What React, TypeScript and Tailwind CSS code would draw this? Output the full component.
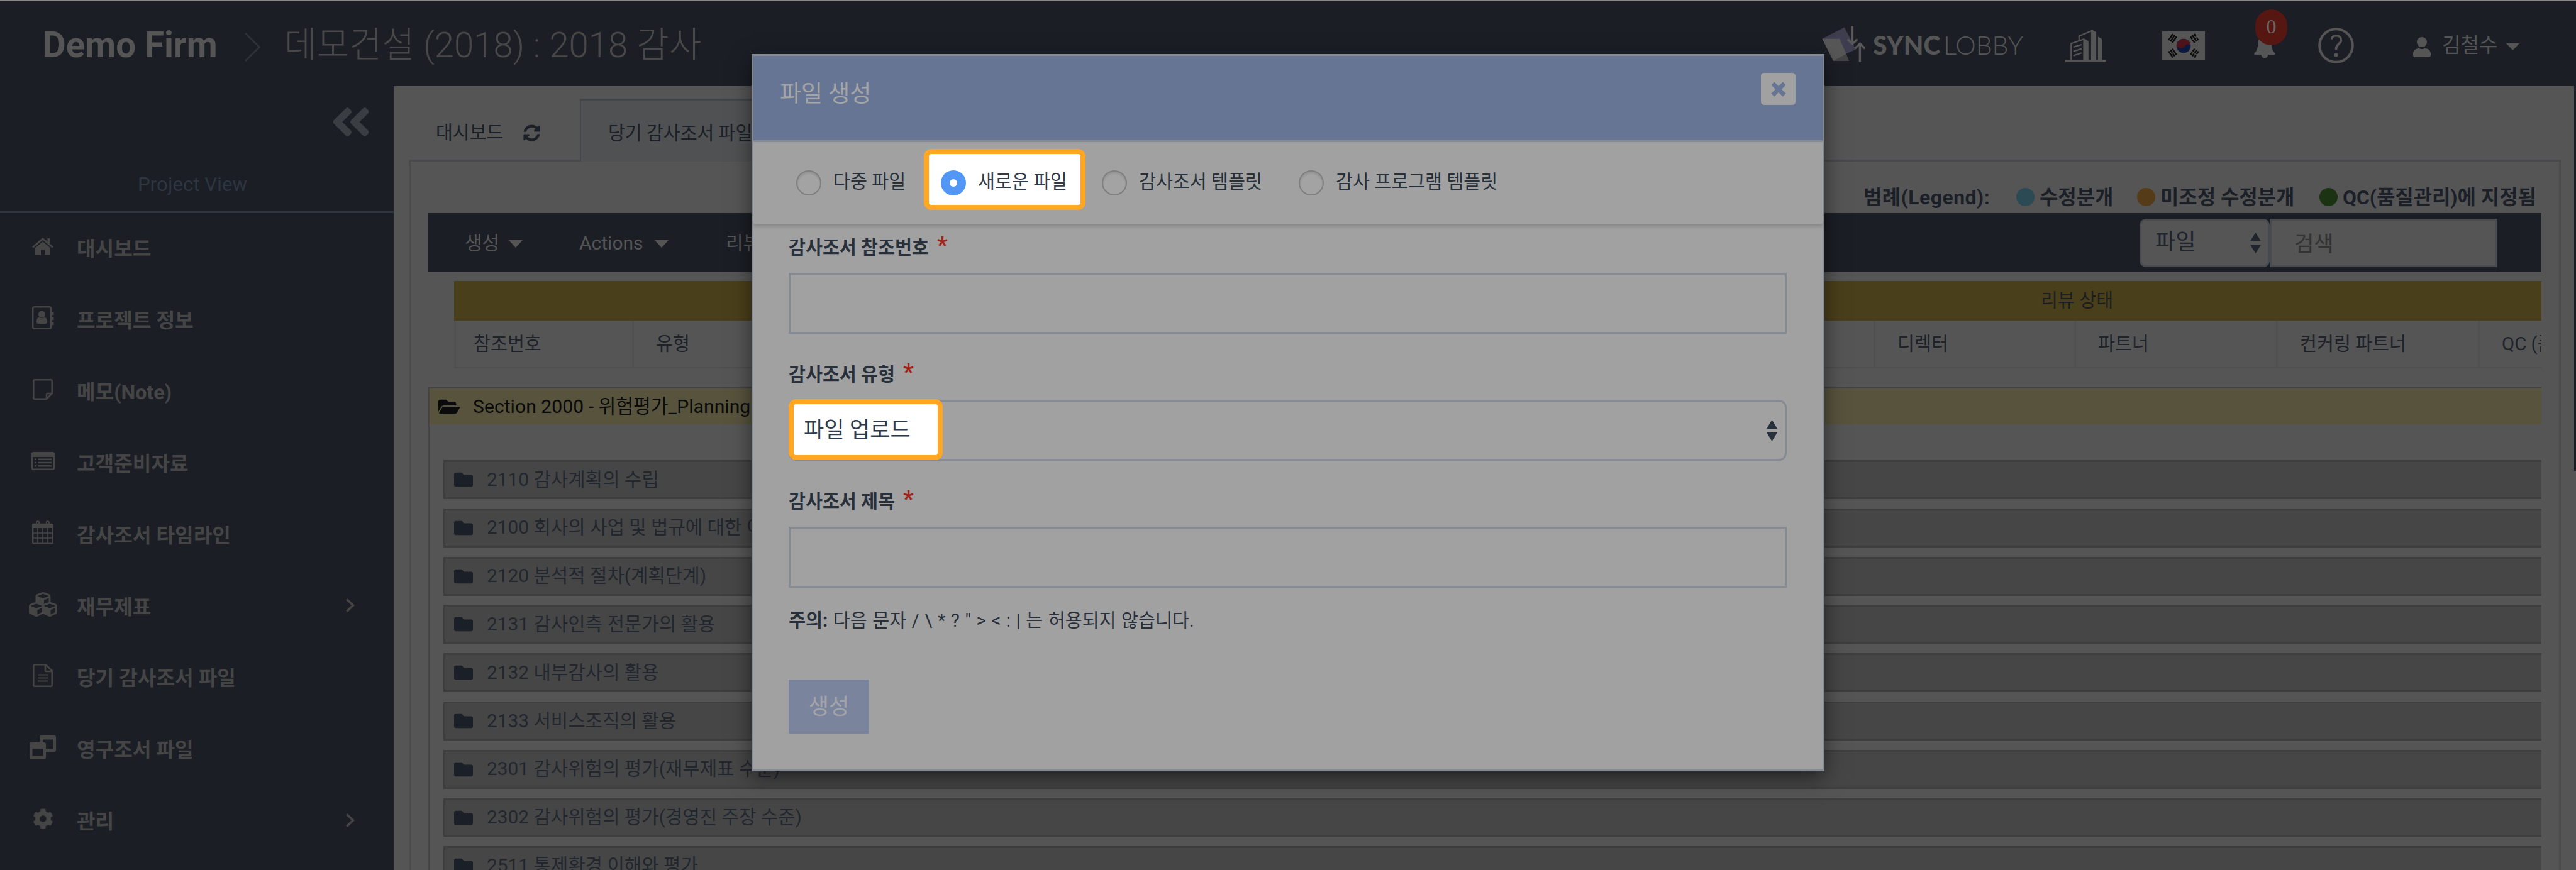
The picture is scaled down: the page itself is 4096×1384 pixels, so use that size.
import React from "react";
import { FaAngleDoubleLeft, FaCog, FaCubes, FaFolder, FaFolderOpen, FaUser, FaSyncAlt } from "react-icons/fa";

const fontStack = "font-[Roboto,'Noto_Sans_CJK_KR',sans-serif]";

function Caret({ className }: { className: string }) {
  return (
    <svg viewBox="0 0 22 12" preserveAspectRatio="none" className={className} fill="currentColor">
      <path d="M0 0H22L11 12Z" />
    </svg>
  );
}

function UpDown({ className }: { className: string }) {
  return (
    <svg viewBox="0 0 17 34" preserveAspectRatio="none" className={className} fill="currentColor">
      <path d="M8.500 0L17 14H0ZM0 20H17L8.500 34Z" />
    </svg>
  );
}

function SyncLogo() {
  return (
    <svg viewBox="50 85 305 256" className="mt-[40px] h-[58px] w-[69px] shrink-0">
      <path d="M52 176L208 96L288 252L215 284Z" fill="#3e3d4f" />
      <path d="M128 332L222 285L240 332Z" fill="#444444" />
      <path d="M52 177H174L222 285L130 332Z" fill="#575757" />
      <g fill="none" stroke="#575757" strokeWidth="15">
        <path d="M264 87V208M230 180L264 213L299 180" />
        <path d="M317 339V215M282 245L317 210L352 245" />
      </g>
    </svg>
  );
}

function Buildings() {
  return (
    <svg viewBox="0 0 65 52" className="ml-[67px] mt-[46px] h-[52px] w-[65px] shrink-0 text-[#555555]">
      <g fill="currentColor">
        <path d="M0 48.6H65V51.6H0Z" />
        <path d="M28.4 14.7H30.5L36.8 18.4V49.5H28.4Z" />
        <path d="M40.9 1.4L43 0.6L49.1 4V49.5H40.9Z" />
        <path d="M51.9 11.3L58.1 15V49.5H51.9Z" />
      </g>
      <g fill="none" stroke="currentColor" strokeWidth="2.2">
        <path d="M9.3 49.5V22.2L30 15.2M21.8 18.1V10.4L42.5 1.7" />
        <path d="M12.7 27.9L25.9 24M12.7 34.7L25.9 30.6M12.7 41.6L25.9 37.2" />
      </g>
    </svg>
  );
}

function Trigram({ x, y, angle, broken }: { x: number; y: number; angle: number; broken: number[] }) {
  return (
    <g transform={`translate(${x} ${y}) rotate(${angle})`} stroke="#0c0c0c" strokeWidth="2.4">
      {[-3.6, 0, 3.6].map((dy, i) => (
        <path key={dy} d={broken.includes(i) ? `M-6 ${dy}H-0.7M0.7 ${dy}H6` : `M-6 ${dy}H6`} />
      ))}
    </g>
  );
}

function KoreaFlag() {
  return (
    <svg viewBox="0 0 68 46" className="ml-[89px] mt-[49px] h-[46px] w-[68px] shrink-0">
      <path d="M0 0H68V46H0Z" fill="#555555" />
      <circle cx="34" cy="23" r="11.3" fill="#0b1a3c" />
      <path d="M23.2 20A11.3 11.3 0 0 1 45.2 22C43 20 39 19.5 36.5 23C33.500 27.500 27 28 23 24Z" fill="#4c131a" />
      <Trigram x={16.6} y={11} angle={-56} broken={[]} />
      <Trigram x={51.2} y={11} angle={56} broken={[0, 2]} />
      <Trigram x={16.6} y={34.6} angle={56} broken={[1]} />
      <Trigram x={51.2} y={34.6} angle={-56} broken={[0, 1, 2]} />
    </svg>
  );
}

function Bell() {
  return (
    <div className="relative ml-[78px] mt-[54px] h-[38px] w-[34px] shrink-0">
      <svg viewBox="0 0 34 38" className="h-[38px] w-[34px]" fill="#555555">
        <path d="M17 2C9 3 7 8 6.500 14C6 22 4 27 0.500 29.500C0 31 0.500 32 1.500 32H32.500C33.500 32 34 31 33.500 29.500C30 27 28 22 27.500 14C27 8 25 3 17 2Z" />
        <path d="M11.500 32H22.500C22 35.500 20 37.500 17 37.500S12 35.500 11.500 32Z" />
      </svg>
      <span className="absolute -top-[40px] left-[2px] flex h-[57px] w-[51px] items-center justify-center rounded-full bg-[#561713] pb-1 font-['Liberation_Serif',serif] text-[32px] leading-none text-[#6e6461]">
        0
      </span>
    </div>
  );
}

function Help() {
  return (
    <svg viewBox="0 0 57 57" className="ml-[68px] mt-[43px] h-[57px] w-[57px] shrink-0" fill="none" stroke="#555555">
      <circle cx="28.500" cy="28.500" r="26.300" strokeWidth="4" />
      <path d="M21.500 18.500C22 14.500 25 12.800 28.500 12.800C33 12.800 36.500 15.500 36.500 20C36.500 26 28.600 26.500 28.600 33V35.500" strokeWidth="3.600" />
      <circle cx="28.600" cy="43.500" r="3" fill="#555555" stroke="none" />
    </svg>
  );
}

const IconHome = () => (
  <svg viewBox="0 0 34 28" className="h-[28px] w-[34px]" fill="currentColor">
    <path d="M17 0L0 14.500L2 16.500L17 4L32 16.500L34 14.500L28.500 9.800V1H24.500V6.300Z" />
    <path d="M17 6.300L5 16.300V28H14V19.500H20V28H29V16.300Z" />
  </svg>
);
const IconAddress = () => (
  <svg viewBox="0 0 35 37" className="h-[37px] w-[35px]" fill="currentColor">
    <rect x="1.250" y="1.250" width="29" height="34.500" rx="2.500" fill="none" stroke="currentColor" strokeWidth="2.500" />
    <path d="M31 9H34.500V14H31ZM31 17H34.500V22H31ZM31 25H34.500V30H31Z" />
    <circle cx="15.500" cy="13" r="5.500" />
    <path d="M7 25.500C7 19.500 9.500 17.500 11.500 17.500C14 19.500 17 19.500 19.500 17.500C21.500 17.500 24 19.500 24 25.500C24 27 23 28 21.500 28H9.500C8 28 7 27 7 25.500Z" />
  </svg>
);
const IconNote = () => (
  <svg viewBox="0 0 32 33" className="h-[33px] w-[32px]" fill="none" stroke="currentColor" strokeWidth="2.500">
    <path d="M3 1.300H29Q30.700 1.300 30.700 3V23L22 31.700H3Q1.300 31.700 1.300 30V3Q1.300 1.300 3 1.300ZM22 31V24Q22 23 23 23H30" />
  </svg>
);
const IconList = () => (
  <svg viewBox="0 0 37 29" className="h-[29px] w-[37px]" fill="currentColor">
    <path fillRule="evenodd" d="M3 0H34Q37 0 37 3V26Q37 29 34 29H3Q0 29 0 26V3Q0 0 3 0ZM2.500 8V25.500Q2.500 26.500 3.500 26.500H33.500Q34.500 26.500 34.500 25.500V8Z" />
    <path d="M5.500 10.500H8V13H5.500ZM5.500 15.800H8V18.300H5.500ZM5.500 21H8V23.500H5.500ZM10.500 10.500H32V13H10.500ZM10.500 15.800H32V18.300H10.500ZM10.500 21H32V23.500H10.500Z" />
  </svg>
);
const IconCalendar = () => (
  <svg viewBox="0 0 34 38" className="h-[38px] w-[34px]" fill="none" stroke="currentColor">
    <path d="M2.500 5H31.500Q34 5 34 7.500V12H0V7.500Q0 5 2.500 5Z" fill="currentColor" stroke="none" />
    <rect x="1.200" y="6" width="31.600" height="30.700" rx="1.500" strokeWidth="2.400" />
    <path d="M1 20H33M1 28H33M9 12V36M17 12V36M25 12V36" strokeWidth="1.600" />
    <rect x="7.200" y="1.200" width="4" height="8" rx="2" strokeWidth="2" />
    <rect x="22.800" y="1.200" width="4" height="8" rx="2" strokeWidth="2" />
  </svg>
);
const IconFile = () => (
  <svg viewBox="0 0 32 37" className="h-[37px] w-[32px]" fill="none" stroke="currentColor" strokeWidth="2.500">
    <path d="M3 1.300H20.500L30.700 11V34Q30.700 35.700 29 35.700H3Q1.300 35.700 1.300 34V3Q1.300 1.300 3 1.300ZM20 2V11Q20 12 21 12H30" />
    <path d="M8 17.500H24M8 22.500H24M8 27.500H24" strokeWidth="2.200" />
  </svg>
);
const IconWindows = () => (
  <svg viewBox="0 0 42 38" className="h-[38px] w-[42px]" fill="currentColor" fillRule="evenodd">
    <path d="M19 0H39.500Q42 0 42 2.500V23Q42 26 39.500 26H26V21.500H37.500V6.500H21V12H16V2.500Q16 0 19 0Z" />
    <path d="M2.500 11H23.500Q26 11 26 13.500V35Q26 38 23.500 38H2.500Q0 38 0 35V13.500Q0 11 2.500 11ZM4.500 21V32.500H21.500V21Z" />
  </svg>
);

const menu: { label: string; icon: React.ReactNode; arrow?: boolean }[] = [
  { label: "대시보드", icon: <IconHome /> },
  { label: "프로젝트 정보", icon: <IconAddress /> },
  { label: "메모(Note)", icon: <IconNote /> },
  { label: "고객준비자료", icon: <IconList /> },
  { label: "감사조서 타임라인", icon: <IconCalendar /> },
  { label: "재무제표", icon: <FaCubes className="h-[45px] w-[45px]" />, arrow: true },
  { label: "당기 감사조서 파일", icon: <IconFile /> },
  { label: "영구조서 파일", icon: <IconWindows /> },
  { label: "관리", icon: <FaCog className="h-[33px] w-[33px]" />, arrow: true },
];

const folders = [
  "2110 감사계획의 수립",
  "2100 회사의 사업 및 법규에 대한 이해",
  "2120 분석적 절차(계획단계)",
  "2131 감사인측 전문가의 활용",
  "2132 내부감사의 활용",
  "2133 서비스조직의 활용",
  "2301 감사위험의 평가(재무제표 수준)",
  "2302 감사위험의 평가(경영진 주장 수준)",
  "2511 통제환경 이해와 평가",
];

function Header() {
  return (
    <header className="flex h-[137px] items-start border-t border-[#8a8a8a] bg-[#1b1e25] pl-[68px]">
      <div className="mt-[41px] w-[321px] shrink-0 whitespace-nowrap text-[56.500px] font-bold leading-[60px] text-[#555555]">Demo Firm</div>
      <svg viewBox="0 0 25 46" className="mt-[51px] h-[46px] w-[25px] shrink-0" fill="none" stroke="#2f3339" strokeWidth="2.500">
        <path d="M1 1L23.500 23L1 45" />
      </svg>
      <div className="ml-[38px] mt-[41px] w-[2445px] shrink-0 whitespace-nowrap text-[56.300px] font-light leading-[60px] text-[#484848]">
        데모건설 (2018) : 2018 감사
      </div>
      <SyncLogo />
      <div className="ml-[12px] mt-[50px] flex w-[239px] shrink-0 whitespace-nowrap font-[Lato,sans-serif] text-[41px] leading-[42px] text-[#555555]">
        <span className="w-[117px] font-black">SYNC</span>
        <span className="font-light">LOBBY</span>
      </div>
      <Buildings />
      <KoreaFlag />
      <Bell />
      <Help />
      <FaUser className="ml-[94px] mt-[58px] h-[32px] w-[28px] shrink-0 text-[#555555]" />
      <div className="ml-[18px] mt-[51px] w-[102px] shrink-0 whitespace-nowrap text-[32px] leading-[40px] text-[#555555]">김철수</div>
      <Caret className="mt-[68px] h-[11px] w-[21px] shrink-0 text-[#555555]" />
    </header>
  );
}

function Sidebar() {
  return (
    <aside className="flex w-[626px] shrink-0 flex-col bg-[#1b1e25]">
      <div className="flex h-[118px] justify-end pr-[36px] pt-[20px]">
        <FaAngleDoubleLeft className="h-[74px] w-[64px] text-[#3a3d41]" />
      </div>
      <div className="h-[84px] border-b-[3px] border-[#2d3540] pl-[219px] pt-[19px] text-[31.300px] leading-[40px] text-[#2d3541]">Project View</div>
      <nav className="flex flex-col">
        {menu.map((m) => (
          <div key={m.label} className="flex h-[113.84px] shrink-0 items-center pb-1 text-[#454545]">
            <div className="ml-[38px] flex w-[60px] shrink-0 items-center justify-center pb-1">{m.icon}</div>
            <div className="ml-[24px] flex-1 whitespace-nowrap pt-[5px] text-[32.200px] font-bold leading-[40px]">{m.label}</div>
            {m.arrow && (
              <svg viewBox="0 0 14 22" className="mr-[62px] h-[22px] w-[14px]" fill="none" stroke="currentColor" strokeWidth="3.600">
                <path d="M1.500 1.500L11.500 11L1.500 20.500" />
              </svg>
            )}
          </div>
        ))}
      </nav>
    </aside>
  );
}

function Tabs() {
  return (
    <div className="flex h-[120px] shrink-0 items-end pl-[24px] text-[29.200px] text-[#1b2028]">
      <div className="flex h-[100px] w-[272px] items-center border-b-[3px] border-[#484a4d] pl-[43px] pt-[12px]">
        <span className="w-[139px] whitespace-nowrap">대시보드</span>
        <FaSyncAlt className="h-[27px] w-[27px]" />
      </div>
      <div className="flex h-[100px] w-[430px] items-center border-x-2 border-t-[3px] border-[#434548] bg-[#505153] pl-[43px] pt-[9px]">당기 감사조서 파일</div>
      <div className="h-[3px] w-[2720px] bg-[#484a4d]" />
    </div>
  );
}

function Legend() {
  const items = [
    { c: "bg-[#2b4a54]", t: "수정분개", w: "w-[192px]" },
    { c: "bg-[#553b18]", t: "미조정 수정분개", w: "w-[290px]" },
    { c: "bg-[#1b3312]", t: "QC(품질관리)에 지정됨", w: "w-[353px]" },
  ];
  return (
    <div className="flex h-[82px] shrink-0 items-center pl-[2283px] pt-[31px] text-[31.900px] font-bold leading-[40px] text-[#1b2028]">
      <span className="w-[243px] shrink-0 whitespace-nowrap tracking-[0.5px]">범례(Legend):</span>
      {items.map((i) => (
        <div key={i.t} className={`flex shrink-0 items-center ${i.w}`}>
          <i className={`h-[29px] w-[29px] shrink-0 rounded-full ${i.c}`} />
          <span className="ml-[8px] whitespace-nowrap">{i.t}</span>
        </div>
      ))}
    </div>
  );
}

function Toolbar() {
  return (
    <div className="flex h-[94px] shrink-0 items-center bg-[#1b1e25] pl-[59px] text-[30px] text-[#555555]">
      <span className="w-[70px] shrink-0 whitespace-nowrap">생성</span>
      <Caret className="mt-[3px] h-[12px] w-[22px] shrink-0" />
      <span className="ml-[90px] w-[120px] shrink-0">Actions</span>
      <Caret className="mt-[3px] h-[12px] w-[22px] shrink-0" />
      <span className="ml-[91px] w-[2248px] shrink-0 whitespace-nowrap">리뷰</span>
      <div className="flex h-[77px] w-[207px] shrink-0 items-center rounded-[10px] border-[3px] border-[#484c51] bg-[#555555] pl-[22px] text-[35px] text-[#1f242d]">
        <span className="w-[151px]">파일</span>
        <UpDown className="h-[33px] w-[17px]" />
      </div>
      <div className="flex h-[77px] w-[362px] shrink-0 items-center border-[3px] border-[#484c51] bg-[#555555] pl-[36px] pt-[4px] text-[34px] text-[#333333]">검색</div>
    </div>
  );
}

function Columns() {
  const cols = [
    { t: "참조번호", w: "w-[283px] pl-[28px]" },
    { t: "유형", w: "w-[1974px] pl-[35px]" },
    { t: "디렉터", w: "w-[319px] pl-[35px]" },
    { t: "파트너", w: "w-[321px] pl-[35px]" },
    { t: "컨커링 파트너", w: "w-[321px] pl-[35px]" },
    { t: "QC (품질관리)", w: "w-[321px] pl-[35px]" },
  ];
  return (
    <div className="ml-[42px] mt-[14px] shrink-0 text-[29.300px] text-[#1e232b]">
      <div className="h-[63px] bg-[#4a3f1b] pl-[2523px] leading-[63px] text-[#1b1e20]">리뷰 상태</div>
      <div className="flex h-[76px] overflow-hidden border-b-2 border-[#4f4f50]">
        {cols.map((c) => (
          <div key={c.t} className={`shrink-0 whitespace-nowrap border-l-[3px] border-[#505051] leading-[75px] ${c.w}`}>
            {c.t}
          </div>
        ))}
      </div>
    </div>
  );
}

function Main() {
  return (
    <main className="flex flex-1 flex-col bg-[#555555]">
      <Tabs />
      <div className="ml-[24px] flex h-[1128px] w-[3422px] flex-col overflow-hidden border-x-[3px] border-[#4a4b4d] pl-[27px] pr-[28px]">
        <Legend />
        <Toolbar />
        <Columns />
        <section className="mt-[29px] h-[800px] shrink-0 border-l-[3px] border-t-[3px] border-[#434343]">
          <div className="flex h-[57px] items-center bg-[#57533d] pl-[14px] text-[30.200px] text-[#0b0b0b]">
            <FaFolderOpen className="h-[34px] w-[34px]" />
            <span className="ml-[21px]">Section 2000 - 위험평가_Planning</span>
          </div>
          <div className="mt-[57px] flex flex-col gap-[14.800px] pl-[22px]">
            {folders.map((f) => (
              <div key={f} className="flex h-[62px] shrink-0 items-center border-y-[3px] border-l-[3px] border-[#3e3e3e] bg-[#464646] pl-[14px] text-[29.800px] text-[#22272f]">
                <FaFolder className="h-[32px] w-[30px] text-[#1b1f27]" />
                <span className="ml-[22px] whitespace-nowrap">{f}</span>
              </div>
            ))}
          </div>
        </section>
      </div>
    </main>
  );
}

function Radio({ label, className }: { label: string; className: string }) {
  return (
    <label className={`flex items-center ${className}`}>
      <i className="h-[40px] w-[40px] shrink-0 rounded-full border-2 border-[#7f7f7f] bg-[#a3a3a3] shadow-[inset_0_3px_3px_rgba(0,0,0,0.1)]" />
      <span className="ml-[19px] whitespace-nowrap pb-[2px]">{label}</span>
    </label>
  );
}

function FieldLabel({ text, className }: { text: string; className: string }) {
  return (
    <div className={`flex h-[40px] text-[29.300px] font-bold leading-[41px] text-[#27303b] ${className}`}>
      <span>{text}</span>
      <span className="ml-[13px] text-[37px] leading-[31px] text-[#9f2419]">*</span>
    </div>
  );
}

function Modal() {
  return (
    <div className="absolute left-[1195px] top-[86px] flex h-[1141px] w-[1706px] flex-col border-[3px] border-[#868b93] bg-[#a1a1a1] text-[29.300px] text-[#27303b] shadow-[0_10px_31px_rgba(0,0,0,0.5)]">
      <div className="flex h-[137px] shrink-0 justify-between border-b-[3px] border-[#868b93] bg-[#677595] pl-[42px] pr-[43px]">
        <h2 className="mt-[36px] text-[37px] leading-[50px] text-[#a5a5a5]">파일 생성</h2>
        <button className="mt-[27px] flex h-[51px] w-[55px] items-center justify-center rounded-[5px] bg-[#a1a1a1]">
          <svg viewBox="0 0 26 26" className="h-[24px] w-[26px]" fill="none" stroke="#677595" strokeWidth="7.500">
            <path d="M3 3L23 23M23 3L3 23" />
          </svg>
        </button>
      </div>
      <div className="flex h-[130px] shrink-0 items-center pl-[68px] shadow-[0_4px_6px_rgba(0,0,0,0.18)]">
        <Radio label="다중 파일" className="w-[230px]" />
        <label className="relative flex h-[40px] w-[256px] items-center">
          <span className="absolute -left-[27px] -top-[34px] h-[97px] w-[257px] rounded-[12px] border-[8.500px] border-[#ffa623] bg-white" />
          <i className="relative flex h-[40px] w-[40px] shrink-0 items-center justify-center rounded-full bg-[#5297f5]">
            <b className="h-[12px] w-[12px] rounded-full bg-white" />
          </i>
          <span className="relative ml-[19px] whitespace-nowrap pb-[2px] text-[#2f3b4b]">새로운 파일</span>
        </label>
        <Radio label="감사조서 템플릿" className="w-[313px]" />
        <Radio label="감사 프로그램 템플릿" className="w-[400px]" />
      </div>
      <div className="flex flex-col pl-[56px] pr-[57px]">
        <FieldLabel text="감사조서 참조번호" className="mt-[18px]" />
        <div className="mt-[20px] h-[97px] border-[3px] border-[#868b93]" />
        <FieldLabel text="감사조서 유형" className="mt-[45px]" />
        <div className="relative mt-[20px] flex h-[97px] items-center justify-end rounded-[12px] border-[3px] border-[#868b93] pr-[12px]">
          <div className="absolute -left-[3px] -top-[4px] flex h-[97px] w-[245px] items-center rounded-[12px] border-[8.500px] border-[#ffa623] bg-white pl-[16px] pt-[3px] text-[35px] text-[#2f3b4b]">
            파일 업로드
          </div>
          <UpDown className="h-[34px] w-[17px]" />
        </div>
        <FieldLabel text="감사조서 제목" className="mt-[45px]" />
        <div className="mt-[20px] h-[97px] border-[3px] border-[#868b93]" />
        <p className="mt-[32px] leading-[40px] [word-spacing:1.300px]">
          <b>주의:</b> 다음 문자 / \ * ? " &gt; &lt; : | 는 허용되지 않습니다.
        </p>
        <button className="mt-[74px] h-[86px] w-[128px] bg-[#7b849d] pt-[2px] text-[35px] text-[#a2a4aa]">생성</button>
      </div>
    </div>
  );
}

export default function App() {
  return (
    <div className={`relative h-[1384px] w-[4096px] overflow-hidden bg-[#1b1e25] ${fontStack}`}>
      <Header />
      <div className="flex h-[1247px]">
        <Sidebar />
        <Main />
        <div className="flex w-[3px] flex-col bg-[#555555]">
          <div className="h-[612px] bg-[#1b1e25]" />
        </div>
      </div>
      <Modal />
    </div>
  );
}
